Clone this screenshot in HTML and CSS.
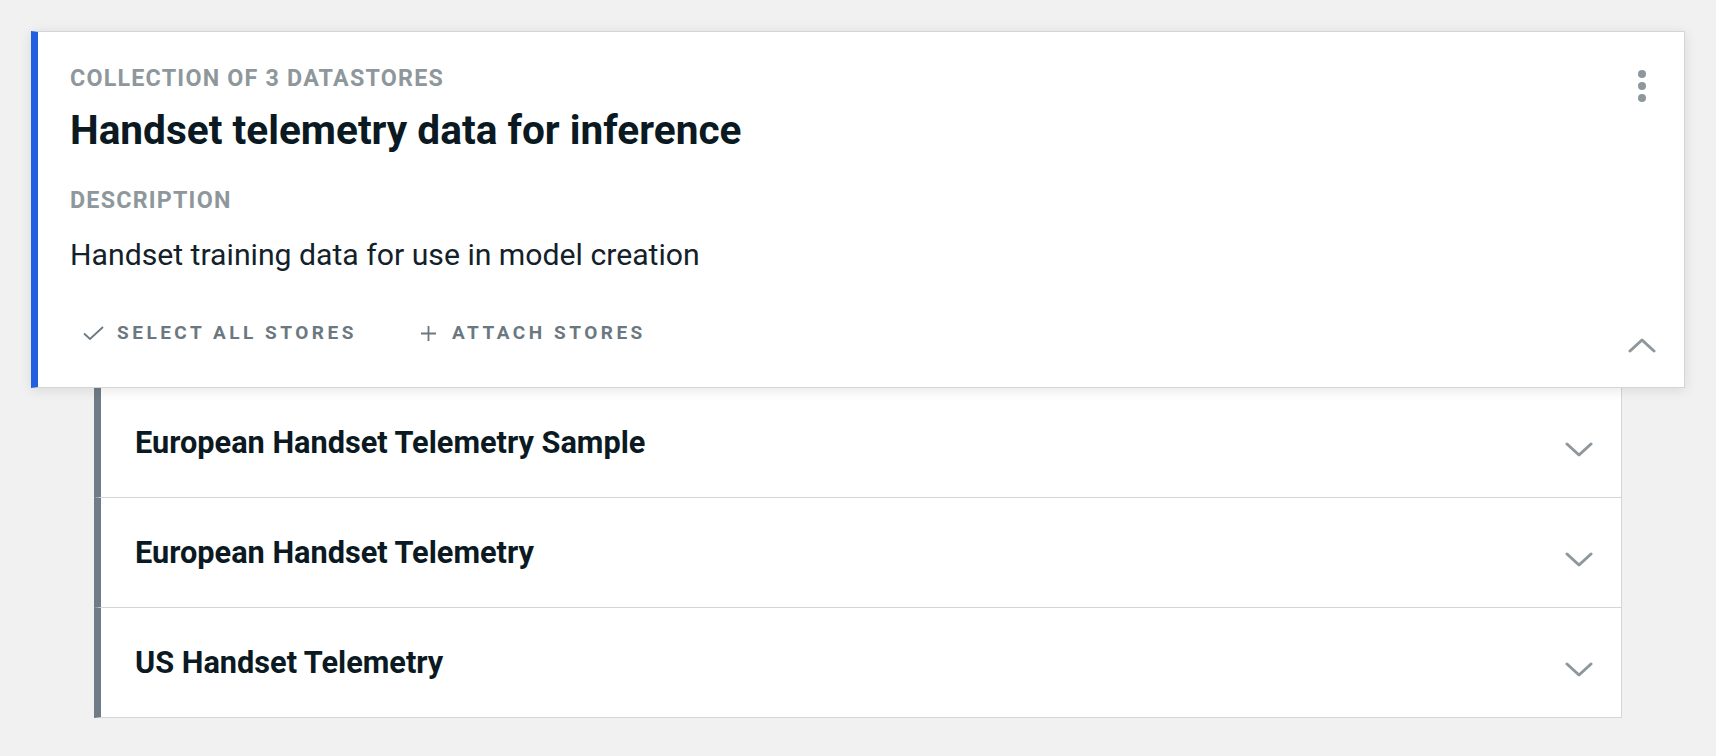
FILE: index.html
```html
<!DOCTYPE html>
<html lang="en">
<head>
<meta charset="utf-8">
<title>Collection</title>
<link rel="stylesheet" href="styles.css">
</head>
<body>
<div class="page">
  <section class="card">
    <div class="card-main">
      <div class="label">Collection of 3 datastores</div>
      <h1 class="title">Handset telemetry data for inference</h1>
      <div class="label desc-label">Description</div>
      <p class="desc">Handset training data for use in model creation</p>
      <div class="actions">
        <button class="action">
          <svg class="ico-check" width="21" height="14" viewBox="0 0 21 14"><path d="M1 7.5 L7 13 L20 1" fill="none" stroke="#6c7880" stroke-width="1.8"/></svg>
          <span>Select all stores</span>
        </button>
        <button class="action action-attach">
          <svg class="ico-plus" width="15" height="15" viewBox="0 0 15 15"><path d="M7.5 0 V15 M0 7.5 H15" fill="none" stroke="#6c7880" stroke-width="1.8"/></svg>
          <span>Attach stores</span>
        </button>
      </div>
    </div>
    <div class="card-side">
      <div class="kebab"><span></span><span></span><span></span></div>
      <svg class="chev" width="28" height="16" viewBox="0 0 28 16"><path d="M2 14 L14 3 L26 14" fill="none" stroke="#8e979b" stroke-width="3" stroke-linecap="round" stroke-linejoin="round"/></svg>
    </div>
  </section>
  <ul class="stores">
    <li class="store">
      <span class="store-name">European Handset Telemetry Sample</span>
      <svg class="chev chev-down" width="28" height="16" viewBox="0 0 28 16"><path d="M2 2 L14 13 L26 2" fill="none" stroke="#8e979b" stroke-width="3" stroke-linecap="round" stroke-linejoin="round"/></svg>
    </li>
    <li class="store">
      <span class="store-name">European Handset Telemetry</span>
      <svg class="chev chev-down" width="28" height="16" viewBox="0 0 28 16"><path d="M2 2 L14 13 L26 2" fill="none" stroke="#8e979b" stroke-width="3" stroke-linecap="round" stroke-linejoin="round"/></svg>
    </li>
    <li class="store">
      <span class="store-name">US Handset Telemetry</span>
      <svg class="chev chev-down" width="28" height="16" viewBox="0 0 28 16"><path d="M2 2 L14 13 L26 2" fill="none" stroke="#8e979b" stroke-width="3" stroke-linecap="round" stroke-linejoin="round"/></svg>
    </li>
  </ul>
</div>
</body>
</html>
```
FILE: styles.css
```css
* { box-sizing: border-box; }
html, body { margin: 0; padding: 0; }
body {
  background: #f1f1f1;
  font-family: Roboto, "Liberation Sans", sans-serif;
  color: #0c1a22;
}
.page {
  padding: 31px 31px 0 31px;
}
.card {
  position: relative;
  z-index: 1;
  display: flex;
  background: #fff;
  border: 1px solid #d2d6d7;
  border-left: 7px solid #2160de;
  box-shadow: 0 2px 12px rgba(0, 0, 0, 0.10);
}
.card-main {
  flex: 1;
  padding: 32px 0 42px 32px;
}
.label {
  font-size: 23.3px;
  line-height: 28px;
  font-weight: 700;
  letter-spacing: 1.2px;
  text-transform: uppercase;
  color: #8e979b;
}
.title {
  margin: 14px 0 0 0;
  font-size: 40.6px;
  line-height: 48px;
  font-weight: 700;
  color: #0b1a22;
}
.desc-label {
  margin-top: 32px;
}
.desc {
  margin: 23px 0 0 0;
  font-size: 30.2px;
  line-height: 36px;
  font-weight: 400;
  color: #13212a;
}
.actions {
  margin-top: 48px;
  display: flex;
  gap: 64px;
}
.action {
  display: flex;
  align-items: center;
  gap: 13px;
  padding: 0 0 0 13px;
  border: 0;
  background: none;
  font-family: inherit;
  font-size: 19px;
  line-height: 24px;
  font-weight: 700;
  letter-spacing: 3.5px;
  text-transform: uppercase;
  color: #6c7880;
}
.action-attach { padding-left: 0; gap: 16px; }
.card-side {
  width: 28px;
  margin-right: 28px;
  padding: 38px 0 34px 0;
  display: flex;
  flex-direction: column;
  justify-content: space-between;
  align-items: center;
}
.kebab {
  display: flex;
  flex-direction: column;
  gap: 4px;
}
.kebab span {
  width: 8px;
  height: 8px;
  border-radius: 50%;
  background: #8e979b;
}
.chev { display: block; }
.stores {
  list-style: none;
  margin: 0 63px;
  padding: 0;
}
.store {
  height: 110px;
  display: flex;
  align-items: center;
  justify-content: space-between;
  padding: 0 28px 0 34px;
  background: #fff;
  border-right: 1px solid #d2d6d7;
  border-bottom: 1px solid #d2d6d7;
  border-left: 7px solid #6f7c87;
}
.store-name {
  font-size: 30.7px;
  font-weight: 700;
  color: #0b1a22;
}
.chev-down { margin-top: 14px; }
```
